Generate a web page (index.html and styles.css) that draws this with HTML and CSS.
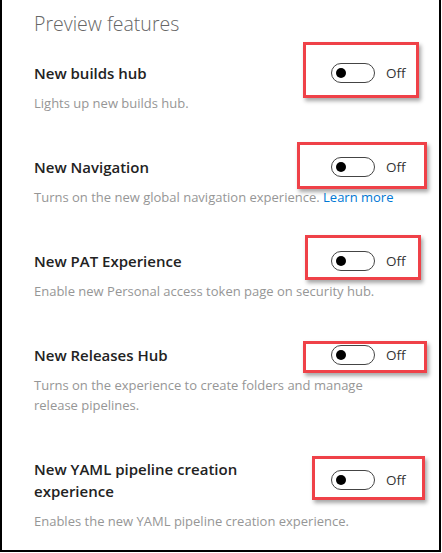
FILE: index.html
```html
<!DOCTYPE html>
<html lang="en">
<head>
<meta charset="utf-8">
<title>Preview features</title>
<link rel="stylesheet" href="styles.css">
</head>
<body>
<div class="frame">
  <h1 class="heading">Preview features</h1>

  <section class="feature f1">
    <div class="row">
      <div class="title">New builds hub</div>
      <div class="toggle-group">
        <span class="highlight hl-1"></span>
        <span class="switch"><span class="knob"></span></span>
        <span class="state">Off</span>
      </div>
    </div>
    <p class="desc">Lights up new builds hub.</p>
  </section>

  <section class="feature f2">
    <div class="row">
      <div class="title">New Navigation</div>
      <div class="toggle-group">
        <span class="highlight hl-2"></span>
        <span class="switch"><span class="knob"></span></span>
        <span class="state">Off</span>
      </div>
    </div>
    <p class="desc">Turns on the new global navigation experience. <a class="link" href="#">Learn more</a></p>
  </section>

  <section class="feature f3">
    <div class="row">
      <div class="title">New PAT Experience</div>
      <div class="toggle-group">
        <span class="highlight hl-3"></span>
        <span class="switch"><span class="knob"></span></span>
        <span class="state">Off</span>
      </div>
    </div>
    <p class="desc">Enable new Personal access token page on security hub.</p>
  </section>

  <section class="feature f4">
    <div class="row">
      <div class="title">New Releases Hub</div>
      <div class="toggle-group">
        <span class="highlight hl-4"></span>
        <span class="switch"><span class="knob"></span></span>
        <span class="state">Off</span>
      </div>
    </div>
    <p class="desc">Turns on the experience to create folders and manage release pipelines.</p>
  </section>

  <section class="feature f5">
    <div class="row">
      <div class="title">New YAML pipeline creation experience</div>
      <div class="toggle-group">
        <span class="highlight hl-5"></span>
        <span class="switch"><span class="knob"></span></span>
        <span class="state">Off</span>
      </div>
    </div>
    <p class="desc">Enables the new YAML pipeline creation experience.</p>
  </section>
</div>
</body>
</html>
```

FILE: styles.css
```css
* { box-sizing: border-box; }

html, body {
  margin: 0;
  padding: 0;
  background: #ffffff;
}

body {
  font-family: "Open Sans", "Noto Sans", "Liberation Sans", sans-serif;
  color: #222222;
}

.frame {
  width: 441px;
  height: 552px;
  border-left: 2px solid #000000;
  border-right: 2px solid #000000;
  border-bottom: 2px solid #000000;
  padding: 10px 16px 0 32px;
  overflow: hidden;
}

.heading {
  margin: 0;
  font-size: 19.5px;
  line-height: 28px;
  font-weight: 300;
  color: #666666;
}

.feature {
  margin-top: 43px;
}

.feature.f1 { margin-top: 24px; }

.row {
  display: flex;
  align-items: center;
  gap: 40px;
}

.title {
  flex: 1;
  font-size: 15px;
  line-height: 22px;
  font-weight: 600;
  color: #222222;
}

.toggle-group {
  position: relative;
  width: 92px;
  flex: none;
  display: flex;
  align-items: center;
  gap: 11px;
}

.switch {
  width: 44px;
  height: 20px;
  border: 1px solid #444444;
  border-radius: 10px;
  display: flex;
  align-items: center;
  padding-left: 4px;
}

.knob {
  width: 10px;
  height: 10px;
  border-radius: 50%;
  background: #000000;
}

.state {
  font-size: 13.5px;
  line-height: 20px;
  color: #333333;
}

.desc {
  margin: 9px 0 0 0;
  max-width: 376px;
  font-size: 13px;
  line-height: 20px;
  color: #969696;
}

.link {
  color: #0078d4;
  text-decoration: none;
}

.highlight {
  position: absolute;
  border: 3px solid #ef4148;
  box-shadow: 2px 3px 4px rgba(0, 0, 0, 0.35);
  pointer-events: none;
}

.hl-1 { left: -28px; top: -21px; width: 116px; height: 56px; }
.hl-2 { left: -34px; top: -15px; width: 130px; height: 47px; }
.hl-3 { left: -26px; top: -16px; width: 116px; height: 45px; }
.hl-4 { left: -28px; top: -4px; width: 124px; height: 32px; }
.hl-5 { left: -19px; top: -14px; width: 113px; height: 44px; }
```
